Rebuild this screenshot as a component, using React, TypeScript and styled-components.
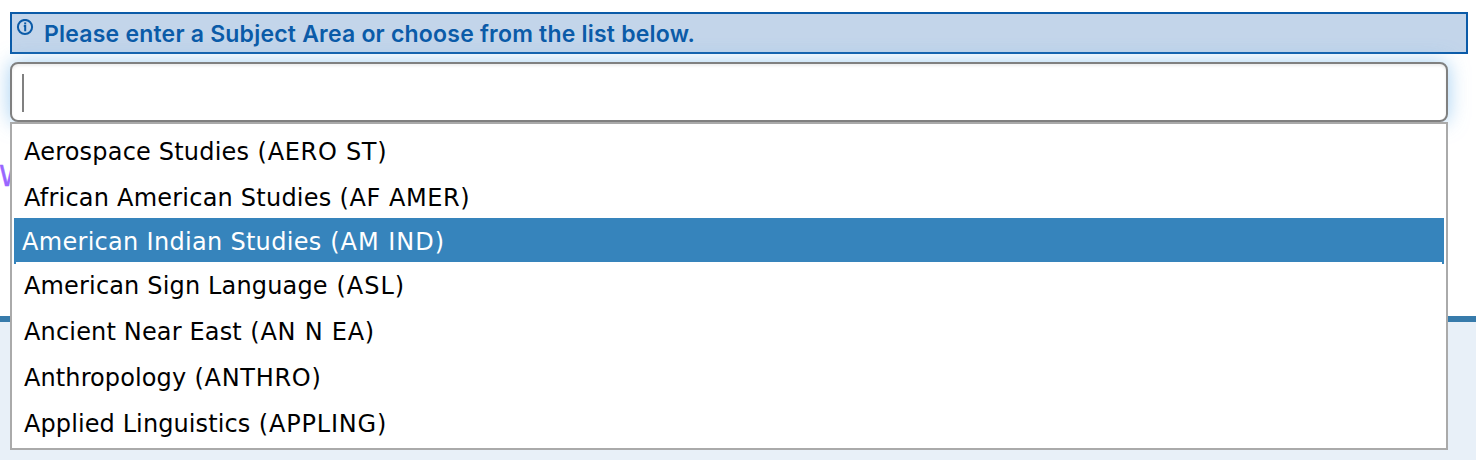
import React from 'react';
import styled, { createGlobalStyle } from 'styled-components';

const GlobalStyle = createGlobalStyle`
  * { box-sizing: border-box; }
  body { margin: 0; background: #fff; overflow: hidden; }
`;

const Page = styled.div`
  display: flex;
  flex-direction: column;
  height: 460px;
  overflow: hidden;
`;

const SearchArea = styled.div`
  display: flex;
  flex-direction: column;
  gap: 8px;
  padding: 12px 8px 0 10px;
`;

const Notice = styled.div`
  display: flex;
  align-items: flex-start;
  height: 42px;
  padding: 5px 4px 0;
  border: 2px solid #0b5ba8;
  background: #c3d5ea;
  color: #0b5ba8;
`;

const InfoIcon = styled.svg`
  width: 18px;
  height: 18px;
  flex: none;
`;

const NoticeText = styled.span`
  margin-left: 10px;
  font: 600 23px/30px Inter, sans-serif;
  letter-spacing: 0.21px;
  white-space: nowrap;
`;

const Combo = styled.div`
  position: relative;
  width: 1438px;
`;

const Field = styled.div`
  display: flex;
  height: 60px;
  padding: 10px 10px 0;
  border: 2px solid #808080;
  border-radius: 8px;
  background: #fff;
  box-shadow: inset 0 2px 3px rgba(0, 0, 0, 0.075), 0 0 20px rgba(102, 175, 233, 0.6);
`;

const Caret = styled.span`
  width: 2px;
  height: 38px;
  background: #808080;
`;

const Menu = styled.ul`
  position: absolute;
  z-index: 1;
  top: 60px;
  left: 0;
  width: 100%;
  height: 328px;
  margin: 0;
  padding: 4px 2px;
  border: 2px solid #aaa;
  background: #fff;
  list-style: none;
`;

const Option = styled.li<{ $active?: boolean }>`
  height: ${p => (p.$active ? 44 : 46)}px;
  margin-top: ${p => (p.$active ? -2 : 0)}px;
  padding-left: ${p => (p.$active ? 8 : 10)}px;
  background: ${p => (p.$active ? '#3684bc' : 'transparent')};
  color: ${p => (p.$active ? '#fff' : '#000')};
  font: 24px/48px 'DejaVu Sans', Verdana, sans-serif;
  white-space: pre;

  /* the side borders run on below the highlighted row */
  ${p => p.$active && `
    border: solid #3684bc;
    border-width: 0 2px;
    padding-left: 6px;
    & + li {
      background:
        linear-gradient(#3684bc, #3684bc) left top / 2px 2px no-repeat,
        linear-gradient(#3684bc, #3684bc) right top / 2px 2px no-repeat;
    }
  `}
`;

const Run = styled.span<{ $spacing: number }>`
  letter-spacing: ${p => p.$spacing}px;
`;

const Link = styled.div`
  height: 194px;
  padding-top: 39px;
  color: #9966ff;
  font: 28.5px/32px 'DejaVu Sans', sans-serif;
  text-indent: -1px;
  -webkit-text-stroke: 0.4px #9966ff;
`;

const Results = styled.div`
  flex: 1;
  border-top: 6px solid #377bab;
  background: #e8f0f8;
`;

const subjects = [
  { name: 'Aerospace Studies', code: 'AERO ST', nameGap: 0.2, codeGap: 0.7 },
  { name: 'African American Studies', code: 'AF AMER', nameGap: 0.22, codeGap: 0.55 },
  { name: 'American Indian Studies', code: 'AM IND', nameGap: 0.3, codeGap: 1, active: true },
  { name: 'American Sign Language', code: 'ASL', nameGap: 0.16, codeGap: 1 },
  { name: 'Ancient Near East', code: 'AN N EA', nameGap: 0.16, codeGap: 0.75 },
  { name: 'Anthropology', code: 'ANTHRO', nameGap: 0.1, codeGap: 0.7 },
  { name: 'Applied Linguistics', code: 'APPLING', nameGap: 0.1, codeGap: 0.8 },
];

export default function App() {
  return (
    <Page>
      <GlobalStyle />
      <SearchArea>
        <Notice>
          <InfoIcon viewBox="0 0 18 18" fill="none" stroke="currentColor">
            <circle cx="9" cy="8" r="7.1" strokeWidth="2" />
            <path d="M7.8 6.9H9.2V12.3" strokeWidth="2" />
            <path d="M8.2 4.4H10.2" strokeWidth="2" />
          </InfoIcon>
          <NoticeText>Please enter a Subject Area or choose from the list below.</NoticeText>
        </Notice>
        <Combo>
          <Field><Caret /></Field>
          <Menu>
            {subjects.map(s => (
              <Option key={s.code} $active={s.active}>
                <Run $spacing={s.nameGap}>{s.name}</Run>
                <Run $spacing={s.codeGap}>{` (${s.code})`}</Run>
              </Option>
            ))}
          </Menu>
        </Combo>
      </SearchArea>
      <Link>W</Link>
      <Results />
    </Page>
  );
}
